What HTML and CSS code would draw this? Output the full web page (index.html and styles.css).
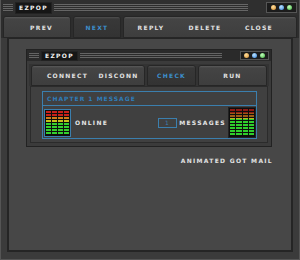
FILE: index.html
```html
<!DOCTYPE html>
<html>
<head>
    <meta charset="UTF-8">
    <title>EZPOP</title>
    <link rel="stylesheet" href="styles.css">
</head>
<body>
    <div class="window">
        <div class="titlebar">
            <div class="grip grip-short"></div>
            <div class="title">EZPOP</div>
            <div class="grip"></div>
            <div class="leds">
                <span class="led orange"></span>
                <span class="led blue"></span>
                <span class="led green"></span>
            </div>
        </div>
        <div class="toolbar">
            <div class="btn btn-prev">PREV</div>
            <div class="btn btn-next active">NEXT</div>
            <div class="btn btn-group btn-group-main">
                <span>REPLY</span>
                <span>DELETE</span>
                <span>CLOSE</span>
            </div>
        </div>
        <div class="panel">
            <div class="inner-window">
                <div class="titlebar inner-titlebar">
                    <div class="grip grip-short"></div>
                    <div class="title">EZPOP</div>
                    <div class="grip"></div>
                    <div class="leds">
                        <span class="led orange"></span>
                        <span class="led blue"></span>
                        <span class="led green"></span>
                    </div>
                </div>
                <div class="toolbar inner-toolbar">
                    <div class="btn btn-group btn-group-inner">
                        <span>CONNECT</span>
                        <span>DISCONN</span>
                    </div>
                    <div class="btn btn-check active">CHECK</div>
                    <div class="btn btn-run">RUN</div>
                </div>
                <div class="inner-panel">
                    <div class="groupbox">
                        <div class="group-header">CHAPTER 1 MESSAGE</div>
                        <div class="group-body">
                            <div class="meter meter-left">
                                <div class="bar"></div><div class="bar"></div><div class="bar"></div><div class="bar"></div>
                            </div>
                            <div class="label online">ONLINE</div>
                            <div class="count">1</div>
                            <div class="label">MESSAGES</div>
                            <div class="meter meter-right">
                                <div class="bar"></div><div class="bar"></div><div class="bar"></div><div class="bar"></div>
                            </div>
                        </div>
                    </div>
                </div>
            </div>
            <div class="got-mail">ANIMATED GOT MAIL</div>
        </div>
    </div>
</body>
</html>
```

FILE: styles.css
```css
body {
    margin: 0;
    background: #2a2a2a;
    font-family: "DejaVu Sans", Verdana, sans-serif;
    font-weight: bold;
    font-size: 6px;
    letter-spacing: 1.3px;
    color: #e2e2e2;
}

.window {
    width: 300px;
    height: 260px;
    box-sizing: border-box;
    background: #3b3b3b;
    border: 1px solid #555;
    border-top: none;
    display: flex;
    flex-direction: column;
}

.titlebar {
    height: 15px;
    display: flex;
    align-items: center;
    gap: 2px;
    padding: 0 2px;
    background: #2f2f2f;
}

.grip {
    flex: 1;
    height: 8px;
    background: repeating-linear-gradient(to bottom, #8a8a8a 0 1px, #2a2a2a 1px 2px);
    opacity: 0.6;
}

.grip-short {
    flex: 0 0 10px;
}

.title {
    background: #161616;
    color: #f0f0f0;
    padding: 2px 3px;
    line-height: 6px;
    border: 1px solid #222;
}

.leds {
    display: flex;
    gap: 3px;
    margin-left: 16px;
    padding: 2px 4px;
    background: #1c1c1c;
    border: 1px solid #555;
}

.led {
    width: 5px;
    height: 5px;
    border-radius: 50%;
}

.led.orange { background: radial-gradient(circle at 40% 35%, #ffe0a0, #d38a2a); }
.led.blue   { background: radial-gradient(circle at 40% 35%, #bfe4ff, #2f7fd8); }
.led.green  { background: radial-gradient(circle at 40% 35%, #c8ffc0, #38b03a); }

.toolbar {
    display: flex;
    gap: 2px;
    padding: 1px 2px 0;
    height: 22px;
    background: #2d2d2d;
}

.btn {
    display: flex;
    align-items: center;
    justify-content: center;
    background: linear-gradient(to bottom, #5a5a5a 0, #444 2px, #3e3e3e 100%);
    border: 1px solid #262626;
    border-radius: 3px 3px 0 0;
    box-sizing: border-box;
}

.btn.active {
    color: #3d8fcd;
    background: linear-gradient(to bottom, #505050 0, #383838 2px, #333 100%);
}

.btn-prev {
    width: 68px;
    padding-left: 9px;
}

.btn-next {
    width: 48px;
}

.btn-group {
    flex: 1;
}

.btn-group span {
    flex: 1;
    text-align: center;
}

.btn-group-main {
    padding-right: 10px;
}

.panel {
    flex: 1;
    margin: 0 6px 7px;
    background: #474747;
    border: 2px solid #252525;
    border-top-width: 1px;
    padding: 10px 17px 0;
    display: flex;
    flex-direction: column;
}

.inner-window {
    background: #3b3b3b;
    border: 1px solid #222;
    display: flex;
    flex-direction: column;
    margin-right: 2px;
}

.inner-titlebar {
    height: 11px;
    background: #2a2a2a;
}

.inner-titlebar .grip {
    height: 6px;
}

.inner-titlebar .title {
    padding: 1px 3px;
}

.inner-titlebar .leds {
    padding: 1px 3px;
}

.inner-toolbar {
    margin: 3px 2px 0;
    height: 21px;
    background: #333;
}

.btn-group-inner {
    padding-left: 10px;
}

.btn-check {
    width: 49px;
}

.btn-run {
    width: 69px;
}

.inner-panel {
    margin: 0 3px 3px;
    background: #404040;
    border: 1px solid #2b2b2b;
    padding: 4px 10px 3px 11px;
}

.groupbox {
    border: 1px solid #3b7fae;
}

.group-header {
    height: 13px;
    line-height: 13px;
    padding-left: 4px;
    color: #2f7dba;
    letter-spacing: 1px;
    border-bottom: 1px solid #3b7fae;
}

.group-body {
    display: flex;
    align-items: center;
    padding: 2px 0 1px 1px;
    height: 29px;
}

.meter {
    display: flex;
    gap: 1px;
    padding: 1px;
    background: #0e0e0e;
    border: 1px solid #3b7fae;
}

.meter-left {
    width: 23px;
    height: 24px;
}

.meter-right {
    width: 24px;
    height: 27px;
    margin-left: 2px;
    border-color: #222;
}

.bar {
    flex: 1;
    background:
        repeating-linear-gradient(to bottom, transparent 0 2px, #0e0e0e 2px 3px),
        linear-gradient(to bottom, #c8201a 0 22%, #d27a18 22% 36%, #c6c21c 36% 44%, #34d02e 44% 100%);
}

.meter-right .bar {
    background:
        repeating-linear-gradient(to bottom, transparent 0 2px, #0e0e0e 2px 3px),
        linear-gradient(to bottom, #8c1a14 0 14%, #9c5a14 14% 28%, #c0b020 28% 36%, #2fcf2c 36% 100%);
}

.label {
    color: #e6e6e6;
}

.online {
    margin-left: 4px;
    flex: 1;
}

.count {
    width: 17px;
    height: 8px;
    border: 1px solid #3b7fae;
    color: #3b7fae;
    line-height: 8px;
    text-align: center;
    margin-right: 2px;
    font-weight: normal;
}

.got-mail {
    text-align: right;
    margin-top: 10px;
    padding-right: 1px;
}
```
